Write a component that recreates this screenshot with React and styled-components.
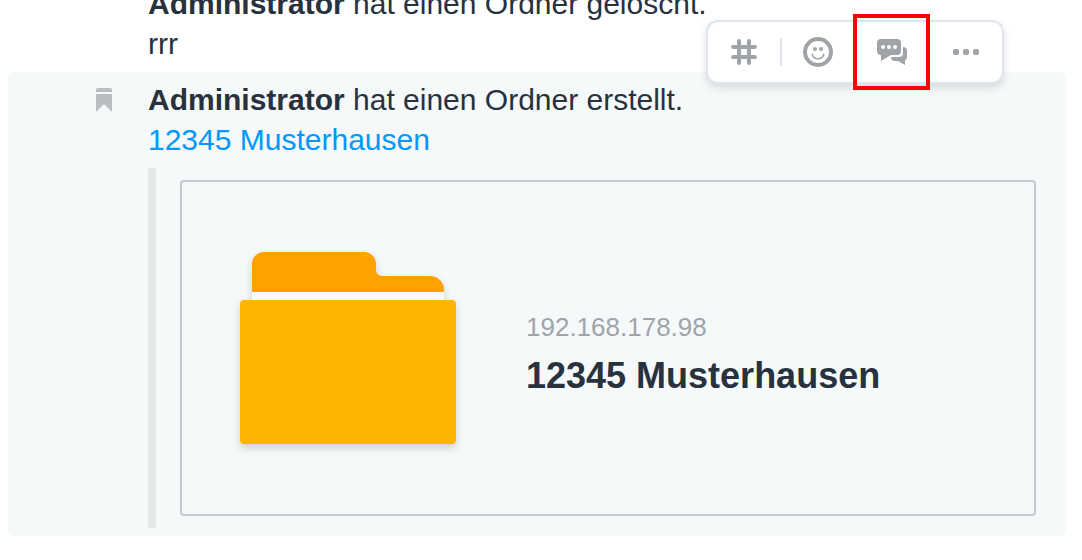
import styled, { createGlobalStyle } from 'styled-components'

const GlobalStyle = createGlobalStyle`
    * {
        box-sizing: border-box;
    }

    body {
        margin: 0;
        background: #ffffff;
        color: #28323e;
        font-family: "Liberation Sans", Arial, sans-serif;
        font-size: 30px;
        line-height: 40px;
    }
`

// newest message stays at the bottom, older ones run out over the top
const Chat = styled.main`
    display: flex;
    flex-direction: column;
    justify-content: flex-end;
    height: 100vh;
    padding: 0 16px 24px 8px;
    overflow: hidden;
`

const Message = styled.article`
    position: relative;
    display: flex;
    flex-shrink: 0;
    padding: 8px 30px 8px 0;
    border-radius: 6px;
    background: ${props => props.$active ? '#f5f9fa' : 'transparent'};
`

const Gutter = styled.div`
    display: flex;
    justify-content: flex-end;
    flex-shrink: 0;
    width: 140px;
    padding: 8px 36px 0 0;
`

const Content = styled.div`
    flex: 1;
    min-width: 0;
`

const Text = styled.p`
    margin: 0;
`

const Link = styled.a`
    color: #0098fa;
    text-decoration: none;
`

const Attachment = styled.div`
    margin-top: 8px;
    padding: 12px 0 12px 24px;
    border-left: 8px solid #e5e7e9;
`

const Card = styled.section`
    display: flex;
    align-items: center;
    gap: 32px;
    padding: 22px 24px;
    border: 2px solid #c5c9d0;
    border-radius: 4px;
`

const FolderPicture = styled.svg`
    flex-shrink: 0;
    width: 288px;
    height: 288px;
    filter: drop-shadow(0 4px 4px rgba(0, 0, 0, 0.16));
`

const Details = styled.div`
    padding-top: 2px;
`

const Host = styled.div`
    color: #a0a4a9;
    font-size: 26px;
    line-height: 54px;
`

const Title = styled.h2`
    margin: 0;
    font-size: 36px;
    font-weight: 700;
    line-height: 44px;
`

const Toolbar = styled.div`
    position: absolute;
    top: -52px;
    right: 62px;
    display: flex;
    align-items: center;
    height: 64px;
    border: 2px solid #dfe5ee;
    border-radius: 12px;
    background: #ffffff;
    box-shadow: 0 4px 8px rgba(0, 0, 0, 0.12);
`

const ToolButton = styled.button`
    position: relative;
    display: flex;
    align-items: center;
    justify-content: center;
    width: 72px;
    height: 60px;
    padding: 0;
    border: none;
    background: none;
    color: #a0a4a9;
    cursor: pointer;

    & + & {
        margin-left: 2px;
    }
`

const Divider = styled.span`
    width: 2px;
    height: 28px;
    background: #dfe5ee;
`

const Highlight = styled.span`
    position: absolute;
    inset: -8px -2px -8px -3px;
    border: 4px solid #ff0000;
`

const Icon = styled.svg`
    width: 32px;
    height: 32px;
`

function Bookmark() {
    return (
        <svg width="16" height="24" viewBox="0 0 16 24" fill="#b9bdc2" aria-hidden="true">
            <path d="M0 4V2a2 2 0 0 1 2-2h12a2 2 0 0 1 2 2v2z" />
            <path d="M0 6h16v18l-8-8-8 8z" />
        </svg>
    )
}

function HashIcon() {
    return (
        <Icon viewBox="0 0 32 32" stroke="currentColor" strokeWidth="4" strokeLinecap="round" aria-hidden="true">
            <path d="M11 5v22M21 5v22M5 11h22M5 21h22" />
        </Icon>
    )
}

function SmileIcon() {
    return (
        <Icon viewBox="0 0 32 32" fill="none" stroke="currentColor" aria-hidden="true">
            <circle cx="16" cy="16" r="13" strokeWidth="4" />
            <circle cx="13" cy="13" r="2" fill="currentColor" stroke="none" />
            <circle cx="19" cy="13" r="2" fill="currentColor" stroke="none" />
            <path d="M10.2 18.2c1.8 6 9.8 6 11.6 0" strokeWidth="1.6" strokeLinecap="round" />
        </Icon>
    )
}

function ThreadIcon() {
    return (
        <Icon viewBox="0 0 32 32" fill="currentColor" aria-hidden="true">
            <path d="M5 3h16a4 4 0 0 1 4 4v8a4 4 0 0 1-4 4h-6l-10 6v-6a4 4 0 0 1-4-4V7a4 4 0 0 1 4-4z" />
            <path d="M27 11a4 4 0 0 1 4 4v6a4 4 0 0 1-2 3.5V29l-7-4h-3a4 4 0 0 1-4-4h8a4 4 0 0 0 4-4z" />
            <g fill="#ffffff">
                <circle cx="7" cy="11" r="2" />
                <circle cx="13" cy="11" r="2" />
                <circle cx="19" cy="11" r="2" />
            </g>
        </Icon>
    )
}

function MoreIcon() {
    return (
        <Icon viewBox="0 0 32 32" fill="currentColor" aria-hidden="true">
            <rect x="3" y="13" width="6" height="6" rx="2" />
            <rect x="13" y="13" width="6" height="6" rx="2" />
            <rect x="23" y="13" width="6" height="6" rx="2" />
        </Icon>
    )
}

function Folder() {
    return (
        <FolderPicture viewBox="0 0 288 288" aria-hidden="true">
            <path d="M46 60a12 12 0 0 1 12-12h100a12 12 0 0 1 12 12v6a6 6 0 0 0 6 6h48a14 14 0 0 1 14 14v2H46z" fill="#ffa200" />
            <path d="M46 88h192v8H46z" fill="#f7fafb" />
            <rect x="34" y="96" width="216" height="144" rx="4" fill="#ffb500" />
        </FolderPicture>
    )
}

function MessageTools() {
    return (
        <Toolbar role="toolbar">
            <ToolButton aria-label="Tag"><HashIcon /></ToolButton>
            <Divider />
            <ToolButton aria-label="Reaktion"><SmileIcon /></ToolButton>
            <ToolButton aria-label="Thread">
                <ThreadIcon />
                <Highlight />
            </ToolButton>
            <ToolButton aria-label="Mehr"><MoreIcon /></ToolButton>
        </Toolbar>
    )
}

function App() {
    return (
        <>
            <GlobalStyle />
            <Chat>
                <Message>
                    <Gutter />
                    <Content>
                        <Text><b>Administrator</b> hat einen Ordner gelöscht.</Text>
                        <Text>rrr</Text>
                    </Content>
                </Message>
                <Message $active>
                    <Gutter><Bookmark /></Gutter>
                    <Content>
                        <Text><b>Administrator</b> hat einen Ordner erstellt.</Text>
                        <Text><Link href="#ordner">12345 Musterhausen</Link></Text>
                        <Attachment>
                            <Card>
                                <Folder />
                                <Details>
                                    <Host>192.168.178.98</Host>
                                    <Title>12345 Musterhausen</Title>
                                </Details>
                            </Card>
                        </Attachment>
                    </Content>
                    <MessageTools />
                </Message>
            </Chat>
        </>
    )
}

export default App
